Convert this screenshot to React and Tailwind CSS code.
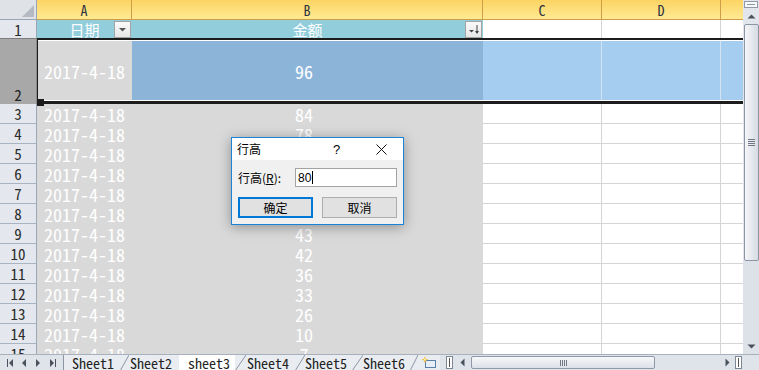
import React from "react";

const MONO = "font-['Noto_Sans_Mono_CJK_SC','DejaVu_Sans_Mono',monospace]";
const CJK = "font-['Noto_Sans_CJK_SC',sans-serif]";

const rows = [
  [3, 84], [4, 78], [5, 71], [6, 65], [7, 58], [8, 51], [9, 43],
  [10, 42], [11, 36], [12, 33], [13, 26], [14, 10], [15, 7],
];

function ColHead({ label, w }) {
  return (
    <div className={`${w} shrink-0 h-full bg-gradient-to-b from-[#fcd462] to-[#ffea92] border-r border-b border-[#cf9d45] flex items-center justify-center text-[14px] text-[#2e3440] leading-none`}>
      {label}
    </div>
  );
}

function DataRow({ n, v }) {
  return (
    <div className="flex h-[20px] shrink-0">
      <div className="w-[37px] shrink-0 bg-[#e4e8ee] border-r border-r-[#9aa6b6] border-b border-b-[#a9b4c3] flex items-center justify-center text-[15px] text-[#2b2b2b] leading-none">
        {n}
      </div>
      <div className="w-[95px] shrink-0 bg-[#d9d9d9] text-white text-[18px] leading-none pl-[7px] flex items-center">
        2017-4-18
      </div>
      <div className="w-[351px] shrink-0 bg-[#d9d9d9] text-white text-[18px] leading-none pr-[7px] flex items-center justify-center">
        {v}
      </div>
      <div className="w-[119px] shrink-0 border-r border-b border-[#d4d4d4]" />
      <div className="w-[119px] shrink-0 border-r border-b border-[#d4d4d4]" />
      <div className="flex-1 border-b border-[#d4d4d4]" />
    </div>
  );
}

function FilterBtn({ sorted }) {
  return (
    <div className="absolute right-[1px] top-[1px] w-[17px] h-[17px] border border-[#a3a3a3] bg-gradient-to-b from-[#fafafa] to-[#e6e6e6] flex items-center justify-center">
      {sorted ? (
        <svg width="13" height="11" viewBox="0 0 13 11">
          <path d="M2 6 L7 6 L4.5 8.5 Z" fill="#444" />
          <path d="M10 1 L10 9" stroke="#444" strokeWidth="1" />
          <path d="M8 7 L10 10 L12 7 Z" fill="#444" />
        </svg>
      ) : (
        <svg width="9" height="5" viewBox="0 0 9 5">
          <path d="M1 1 L8 1 L4.5 4.5 Z" fill="#555" />
        </svg>
      )}
    </div>
  );
}

function VScroll() {
  return (
    <div className="w-[16px] shrink-0 h-full bg-[#e2e5eb] flex flex-col items-center">
      <div className="mt-[1px] h-[7px] w-[14px] border border-[#8e98a6] bg-[#f7f8fa] flex items-center justify-center">
        <div className="w-[8px] h-[1px] bg-[#8e98a6]" />
      </div>
      <div className="h-[16px] flex items-center justify-center">
        <svg width="9" height="5" viewBox="0 0 9 5">
          <path d="M0.5 4.5 L4.5 0.5 L8.5 4.5 Z" fill="#4a525d" />
        </svg>
      </div>
      <div className="h-[237px] w-[15px] rounded-[2px] border border-[#8b95a4] bg-gradient-to-r from-[#f5f6f8] to-[#d6dbe3] flex flex-col items-center justify-center gap-[1px]">
        <div className="w-[7px] h-[1px] bg-[#6f7884]" />
        <div className="w-[7px] h-[1px] bg-[#6f7884]" />
        <div className="w-[7px] h-[1px] bg-[#6f7884]" />
        <div className="w-[7px] h-[1px] bg-[#6f7884]" />
      </div>
      <div className="flex-1 w-full bg-[#dde1e8]" />
      <div className="h-[16px] w-full bg-[#dde1e8] flex items-center justify-center">
        <svg width="9" height="5" viewBox="0 0 9 5">
          <path d="M0.5 0.5 L8.5 0.5 L4.5 4.5 Z" fill="#4a525d" />
        </svg>
      </div>
    </div>
  );
}

function Slash({ w }) {
  return (
    <svg width={w} height="16" viewBox={`0 0 ${w} 16`} className="shrink-0">
      <path d={`M0 16 L${w} 0`} stroke="#8c96a4" strokeWidth="1" />
    </svg>
  );
}

function TabBar() {
  return (
    <div className="h-[16px] shrink-0 flex items-stretch bg-[#dfe3ea] text-[14px] leading-none text-[#222] border-t border-[#a7b0bd]">
      <div className="w-[63px] shrink-0 flex items-center">
        <svg width="63" height="10" viewBox="0 0 63 10">
          <rect x="7" y="1" width="1" height="8" fill="#4a525d" />
          <path d="M13 1 L9 5 L13 9 Z" fill="#4a525d" />
          <path d="M26 1 L22 5 L26 9 Z" fill="#4a525d" />
          <path d="M36 1 L40 5 L36 9 Z" fill="#4a525d" />
          <path d="M50 1 L54 5 L50 9 Z" fill="#4a525d" />
          <rect x="55" y="1" width="1" height="8" fill="#4a525d" />
        </svg>
      </div>
      <div className="flex items-stretch border-l border-[#8c96a4] bg-[#e9ecf1]">
        <div className="w-[56px] pl-[8px] flex items-center">Sheet1</div>
        <Slash w={9} />
        <div className="w-[50px] pl-[1px] flex items-center">Sheet2</div>
        <div className="w-[56px] pl-[9px] flex items-center bg-white">sheet3</div>
        <Slash w={11} />
        <div className="w-[49px] pl-[1px] flex items-center">Sheet4</div>
        <Slash w={10} />
        <div className="w-[47px] flex items-center">Sheet5</div>
        <Slash w={11} />
        <div className="w-[47px] flex items-center">Sheet6</div>
        <Slash w={8} />
        <div className="w-[22px] flex items-center justify-center">
          <svg width="16" height="13" viewBox="0 0 16 13">
            <rect x="4.5" y="4.5" width="10" height="7" fill="#e8eef6" stroke="#5b7fa8" />
            <path d="M4 0.5 L5 3 L7.5 3.5 L5 4.5 L4 7 L3 4.5 L0.5 3.5 L3 3 Z" fill="#f6b026" />
            <circle cx="4" cy="3.6" r="1.1" fill="#fff3b0" />
          </svg>
        </div>
      </div>
      <div className="w-[6px] shrink-0" />
      <div className="w-[7px] shrink-0 my-[1px] border border-[#7d8794] bg-white flex items-center justify-center">
        <div className="w-[1px] h-[9px] bg-[#555]" />
      </div>
      <div className="w-[18px] shrink-0 flex items-center justify-center">
        <svg width="5" height="9" viewBox="0 0 5 9">
          <path d="M4.5 0.5 L0.5 4.5 L4.5 8.5 Z" fill="#4a525d" />
        </svg>
      </div>
      <div className="w-[184px] shrink-0 my-[1px] rounded-[2px] border border-[#8f99a8] bg-gradient-to-b from-[#f6f7f9] to-[#dce0e7] flex items-center justify-center gap-[1px]">
        <div className="w-[1px] h-[6px] bg-[#6f7884]" />
        <div className="w-[1px] h-[6px] bg-[#6f7884]" />
        <div className="w-[1px] h-[6px] bg-[#6f7884]" />
        <div className="w-[1px] h-[6px] bg-[#6f7884]" />
      </div>
      <div className="flex-1" />
      <div className="w-[16px] shrink-0 flex items-center justify-center">
        <svg width="5" height="9" viewBox="0 0 5 9">
          <path d="M0.5 0.5 L4.5 4.5 L0.5 8.5 Z" fill="#4a525d" />
        </svg>
      </div>
      <div className="w-[7px] shrink-0 my-[1px] border border-[#7d8794] bg-white flex items-center justify-center">
        <div className="w-[1px] h-[9px] bg-[#555]" />
      </div>
      <div className="w-[17px] shrink-0" />
    </div>
  );
}

function Dialog() {
  return (
    <div className={`absolute left-[231px] top-[137px] w-[173px] h-[88px] border border-[#1883d7] bg-[#f0f0f0] shadow-[0_2px_12px_rgba(0,0,0,0.35)] flex flex-col ${CJK} text-[12px] leading-none text-black`}>
      <div className="h-[22px] bg-white flex items-center shrink-0">
        <div className="pl-[5px] flex-1">行高</div>
        <div className="w-[45px] flex items-center justify-center font-['Liberation_Sans',sans-serif] text-[13px]">?</div>
        <div className="w-[44px] flex items-center justify-center">
          <svg width="11" height="11" viewBox="0 0 11 11">
            <path d="M0.5 0.5 L10.5 10.5 M10.5 0.5 L0.5 10.5" stroke="#111" strokeWidth="1" />
          </svg>
        </div>
      </div>
      <div className="flex items-center mt-[8px] pl-[6px]">
        <div className="w-[57px]">
          行高(<span className="underline">R</span>):
        </div>
        <div className="w-[102px] h-[19px] bg-white border border-[#a3a3a3] flex items-center pl-[2px] font-['Liberation_Sans',sans-serif] text-[12px]">
          80<span className="inline-block w-[1px] h-[13px] bg-black ml-[1px]" />
        </div>
      </div>
      <div className="flex mt-[10px] pl-[6px] gap-[9px]">
        <div className="w-[75px] h-[21px] border-2 border-[#0078d7] bg-[#e1e1e1] flex items-center justify-center">确定</div>
        <div className="w-[75px] h-[21px] border border-[#adadad] bg-[#e1e1e1] flex items-center justify-center">取消</div>
      </div>
    </div>
  );
}

export default function App() {
  return (
    <div className={`relative w-[759px] h-[370px] overflow-hidden bg-white flex flex-col ${MONO}`}>
      <div className="flex h-[354px] shrink-0">
        <div className="w-[743px] shrink-0 flex flex-col overflow-hidden">
          {/* column headers */}
          <div className="flex h-[20px] shrink-0">
            <div className="w-[37px] shrink-0 h-full bg-[#dfe3e8] border-r border-b border-[#9aa6b6] flex items-end justify-end pr-[1px] pb-[1px]">
              <svg width="14" height="14" viewBox="0 0 14 14">
                <path d="M13 1 L13 13 L1 13 Z" fill="#b5bac2" />
              </svg>
            </div>
            <ColHead label="A" w="w-[95px]" />
            <ColHead label="B" w="w-[351px]" />
            <ColHead label="C" w="w-[119px]" />
            <ColHead label="D" w="w-[119px]" />
            <div className="flex-1 h-full bg-gradient-to-b from-[#fcd462] to-[#ffea92] border-b border-[#cf9d45]" />
          </div>
          {/* row 1 */}
          <div className="flex h-[18px] shrink-0">
            <div className="w-[37px] shrink-0 bg-[#e4e8ee] border-r border-[#9aa6b6] flex items-center justify-center text-[15px] text-[#2b2b2b] leading-none">
              1
            </div>
            <div className={`relative w-[95px] shrink-0 bg-[#92cddc] text-white text-[15px] leading-none flex items-center justify-center ${CJK}`}>
              日期
              <FilterBtn />
            </div>
            <div className={`relative w-[351px] shrink-0 bg-[#92cddc] text-white text-[15px] leading-none flex items-center justify-center ${CJK}`}>
              金额
              <FilterBtn sorted />
            </div>
            <div className="w-[119px] shrink-0 border-r border-[#d4d4d4]" />
            <div className="w-[119px] shrink-0 border-r border-[#d4d4d4]" />
            <div className="flex-1" />
          </div>
          {/* row 2 (selected) */}
          <div className="flex h-[66px] shrink-0">
            <div className="w-[37px] shrink-0 bg-[#a8a8a8] border-t border-[#7d7d7d] border-r border-r-[#8a8a8a] flex items-end justify-center pb-[2px] text-[15px] text-[#222] leading-none">
              2
            </div>
            <div className="relative flex-1 flex flex-col border-t-2 border-b-[3px] border-l border-[#1c1c1c]">
              <div className="flex-1 flex border-y border-white">
                <div className="w-[94px] shrink-0 bg-[#d9d9d9] text-white text-[18px] leading-none pl-[6px] flex items-center">
                  2017-4-18
                </div>
                <div className="w-[351px] shrink-0 bg-[#8cb4d9] text-white text-[18px] leading-none pr-[7px] flex items-center justify-center">
                  96
                </div>
                <div className="w-[119px] shrink-0 bg-[#a4cdf0] border-r border-[#d3e3f1]" />
                <div className="w-[119px] shrink-0 bg-[#a4cdf0] border-r border-[#d3e3f1]" />
                <div className="flex-1 bg-[#a4cdf0]" />
              </div>
              <div className="absolute left-[-1px] bottom-[-5px] w-[7px] h-[7px] bg-[#1c1c1c]" />
            </div>
          </div>
          {rows.map(([n, v]) => (
            <DataRow key={n} n={n} v={v} />
          ))}
        </div>
        <VScroll />
      </div>
      <TabBar />
      <Dialog />
    </div>
  );
}
